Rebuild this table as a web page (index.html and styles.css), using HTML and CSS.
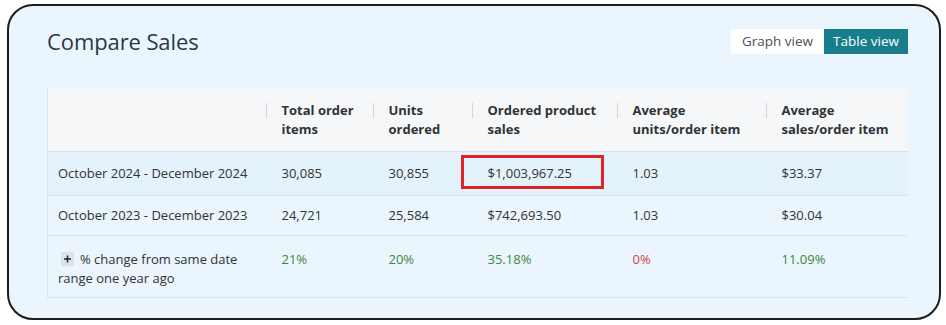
FILE: index.html
```html
<!DOCTYPE html>
<html lang="en">
<head>
<meta charset="utf-8">
<title>Compare Sales</title>
<link rel="stylesheet" href="styles.css">
</head>
<body>
<div class="frame">
  <div class="content">
    <div class="topbar">
      <h1 class="title">Compare Sales</h1>
      <div class="toggle">
        <button class="toggle-btn">Graph view</button>
        <button class="toggle-btn active">Table view</button>
      </div>
    </div>
    <table class="sales">
      <colgroup>
        <col class="c1"><col class="c2"><col class="c3"><col class="c4"><col class="c5"><col class="c6">
      </colgroup>
      <thead>
        <tr>
          <th class="label"></th>
          <th><span class="div"></span>Total order<br>items</th>
          <th><span class="div"></span>Units<br>ordered</th>
          <th><span class="div"></span>Ordered product<br>sales</th>
          <th><span class="div"></span>Average<br>units/order item</th>
          <th><span class="div"></span>Average<br>sales/order item</th>
        </tr>
      </thead>
      <tbody>
        <tr class="r1">
          <td class="label">October 2024 - December 2024</td>
          <td>30,085</td>
          <td>30,855</td>
          <td class="hl">$1,003,967.25<span class="mark"></span></td>
          <td>1.03</td>
          <td>$33.37</td>
        </tr>
        <tr class="r2">
          <td class="label">October 2023 - December 2023</td>
          <td>24,721</td>
          <td>25,584</td>
          <td>$742,693.50</td>
          <td>1.03</td>
          <td>$30.04</td>
        </tr>
        <tr class="r3">
          <td class="label"><svg class="plus" width="13" height="14" viewBox="0 0 13 14"><rect width="13" height="14" fill="#dde2e6"/><path d="M6.5 3.5v7M3 7h7" stroke="#222" stroke-width="1.4"/></svg>% change from same date range one year ago</td>
          <td class="up">21%</td>
          <td class="up">20%</td>
          <td class="up">35.18%</td>
          <td class="down">0%</td>
          <td class="up">11.09%</td>
        </tr>
      </tbody>
    </table>
  </div>
</div>
</body>
</html>
```

FILE: styles.css
```css
* { box-sizing: border-box; }
html, body { margin: 0; padding: 0; background: #ffffff; }
body { font-family: "Open Sans", "Noto Sans", sans-serif; color: #333; }

.frame {
  margin: 4px 0 0 7px;
  width: 934px;
  height: 316px;
  border: 2px solid #1c1c1c;
  border-radius: 26px;
  background: #eaf5fd;
  overflow: hidden;
  padding: 20px 30px 0 38px;
}
.content {
  width: 861px;
  overflow: hidden;
}
.topbar {
  display: flex;
  justify-content: space-between;
  align-items: center;
  height: 30px;
}
.title {
  margin: 0;
  font-size: 22px;
  line-height: 30px;
  font-weight: 400;
  color: #2a3848;
  letter-spacing: -0.1px;
}
.toggle { display: flex; height: 25px; }
.toggle-btn {
  font-family: inherit;
  font-size: 13.5px;
  border: 0;
  margin: 0;
  height: 25px;
  padding: 0;
  background: #ffffff;
  color: #4a4f55;
  width: 93px;
}
.toggle-btn.active {
  background: #187e8b;
  color: #ffffff;
  width: 84px;
}

.sales {
  margin-top: 33px;
  width: 868px;
  table-layout: fixed;
  border-collapse: collapse;
  font-size: 13px;
  border-left: 1px solid #dfe5ea;
}
.c1 { width: 218px; }
.c2 { width: 107px; }
.c3 { width: 99px; }
.c4 { width: 145px; }
.c5 { width: 149px; }
.c6 { width: 150px; }

.sales th, .sales td {
  text-align: left;
  padding: 0 0 0 16px;
  line-height: 19px;
  vertical-align: middle;
}
.sales th.label, .sales td.label { padding-left: 10px; }
.sales thead tr { height: 62px; background: #f5f7f8; }
.sales th {
  position: relative;
  font-weight: 700;
  color: #2f3336;
}
.div {
  position: absolute;
  left: 0;
  top: 14px;
  width: 1px;
  height: 15px;
  background: #cfd5da;
}
.sales tbody tr { border-top: 1px solid #dbe2e8; }
.sales tbody tr.r3 { border-bottom: 1px solid #dbe2e8; }
.r1 { height: 44px; background: #e4f2fb; }
.r2 { height: 40px; background: #eaf5fd; }
.r3 { height: 62px; background: #eaf5fd; }
.r3 td { vertical-align: top; padding-top: 14px; }
.sales td { color: #333; }
.hl { position: relative; }
.mark {
  position: absolute;
  left: -11px;
  top: 3px;
  width: 143px;
  height: 34px;
  border: 3px solid #e3232a;
}
.plus {
  display: inline-block;
  vertical-align: -2px;
  margin: 0 6px 0 3px;
}
.sales td.up { color: #3a8a3a; }
.sales td.down { color: #d5434e; }
```
